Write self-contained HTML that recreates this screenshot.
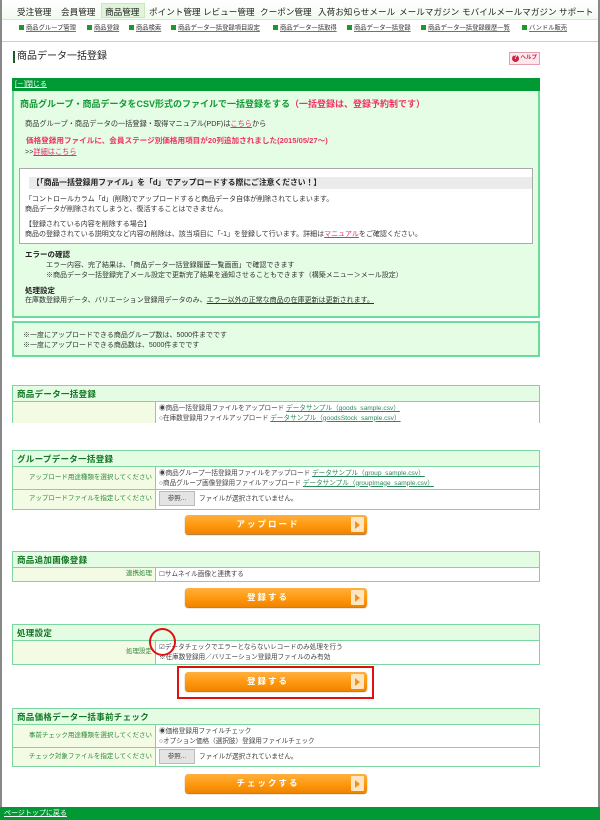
<!DOCTYPE html>
<html><head><meta charset="utf-8">
<style>
*{margin:0;padding:0;box-sizing:border-box}
body{width:600px;height:820px;overflow:hidden;background:#fff;font-family:"Liberation Sans","Noto Sans CJK JP",sans-serif;color:#333;position:relative;font-size:7px;line-height:1}
.a{position:absolute;white-space:nowrap}
.frame{position:absolute;left:0;top:0;width:600px;height:820px;border-left:2px solid #888;border-right:2px solid #888}
.nav{font-size:8.6px;color:#222;top:8px}
.sub{font-size:6.3px;color:#333;top:25px;text-decoration:underline;text-decoration-color:#2a2}
.sub i{display:inline-block;width:5px;height:5px;background:#1a9a2a;margin-right:2px;vertical-align:-0.5px}
.tb{position:absolute;left:12px;width:528px;border:1px solid #7dd6a0;background:#fff}
.th{height:16px;background:#e4fbe4;border-bottom:1px solid #7dd6a0;color:#117722;font-weight:bold;font-size:8.5px;padding:4px 0 0 4px;letter-spacing:.3px}
.row{display:flex;border-bottom:1px solid #7dd6a0}
.row:last-child{border-bottom:none}
.lb{width:143px;background:#f3fbe4;border-right:1px solid #7dd6a0;color:#2a8a3a;font-size:6.5px;text-align:right;padding-right:3px;display:flex;align-items:center;justify-content:flex-end}
.vl{flex:1;font-size:6.6px;padding:2px 3px;line-height:9.5px;color:#444}
.vl u{color:#2a8a5a}
.btn{position:absolute;left:185px;width:182px;height:19px;border-radius:3px;background:linear-gradient(#ffb040,#ff9a10 50%,#f08400);box-shadow:0 1px 1px #a86a20;color:#fff;font-weight:bold;font-size:8.5px;letter-spacing:2px;text-align:center;line-height:19px;padding-right:16px}
.btn:after{content:"";position:absolute;right:3px;top:2px;width:13px;height:15px;background:#ffe6c0;border-radius:1px}
.btn b{position:absolute;right:7px;top:6px;width:0;height:0;border-left:5px solid #f09020;border-top:4px solid transparent;border-bottom:4px solid transparent;z-index:2}
.fb{display:inline-block;width:36px;height:15px;background:#e4e4e4;border:1px solid #bbb;text-align:center;line-height:13px;font-size:6.5px;margin-right:4px;vertical-align:middle}
</style></head><body>
<div class="frame"></div>
<div class="a" style="left:2px;top:0;width:596px;height:20px;background:linear-gradient(#fff,#f2fbf0);border-bottom:1px solid #dde"></div>
<div class="a" style="left:101px;top:3px;width:44px;height:15px;background:#dff4d8;border:1px solid #c8e8c0"></div>
<div class="a nav" style="left:17px">受注管理</div>
<div class="a nav" style="left:61px">会員管理</div>
<div class="a nav" style="left:105px">商品管理</div>
<div class="a nav" style="left:149px">ポイント管理</div>
<div class="a nav" style="left:203px">レビュー管理</div>
<div class="a nav" style="left:260px">クーポン管理</div>
<div class="a nav" style="left:318px">入荷お知らせメール</div>
<div class="a nav" style="left:399px">メールマガジン</div>
<div class="a nav" style="left:462px">モバイルメールマガジン</div>
<div class="a nav" style="left:559px">サポート</div>
<div class="a sub" style="left:19px"><i></i>商品グループ管理</div>
<div class="a sub" style="left:87px"><i></i>商品登録</div>
<div class="a sub" style="left:129px"><i></i>商品検索</div>
<div class="a sub" style="left:171px"><i></i>商品データ一括登録項目設定</div>
<div class="a sub" style="left:273px"><i></i>商品データ一括取得</div>
<div class="a sub" style="left:347px"><i></i>商品データ一括登録</div>
<div class="a sub" style="left:421px"><i></i>商品データ一括登録履歴一覧</div>
<div class="a sub" style="left:522px"><i></i>バンドル販売</div>
<div class="a" style="left:2px;top:41px;width:596px;height:1px;background:#ccc"></div>
<div class="a" style="left:13px;top:51px;width:2px;height:12px;background:#1a5a2a"></div>
<div class="a" style="left:17px;top:52px;font-size:10px;color:#222">商品データ一括登録</div>
<div class="a" style="left:509px;top:52px;width:31px;height:13px;background:#fde8ee;border:1px solid #e0a0b0;font-size:5.5px;color:#d02040;padding:2px 0 0 2px;font-weight:bold"><span style="display:inline-block;width:7px;height:7px;border-radius:50%;background:#d02040;color:#fff;text-align:center;line-height:7px;font-size:6px">?</span> ヘルプ</div>
<div class="a" style="left:12px;top:78px;width:528px;height:13px;background:#009933;color:#fff;font-size:7px;padding:3px 0 0 3px;text-decoration:underline">[－]閉じる</div>
<div class="a" style="left:12px;top:91px;width:528px;height:227px;background:#e5fde5;border:2px solid #66dd99;border-top:none"></div>
<div class="a" style="left:20px;top:100px;font-size:9px;font-weight:bold;color:#119933">商品グループ・商品データをCSV形式のファイルで一括登録をする<span style="color:#ee3366">（一括登録は、登録予約制です）</span></div>
<div class="a" style="left:25px;top:120px;font-size:7.2px">商品グループ・商品データの一括登録・取得マニュアル(PDF)は<u style="color:#e03070">こちら</u>から</div>
<div class="a" style="left:26px;top:137px;font-size:7.6px;color:#ee3366;font-weight:bold">価格登録用ファイルに、会員ステージ別価格用項目が20列追加されました(2015/05/27〜)</div>
<div class="a" style="left:25px;top:148px;font-size:7.2px">&gt;&gt;<u style="color:#e03070">詳細はこちら</u></div>
<div class="a" style="left:19px;top:168px;width:514px;height:76px;background:#fff;border:1px solid #aaa"></div>
<div class="a" style="left:29px;top:177px;width:503px;height:12px;background:#ebebeb;font-size:7.8px;font-weight:bold;color:#222;padding:2px 0 0 3px">【「商品一括登録用ファイル」を「d」でアップロードする際にご注意ください！】</div>
<div class="a" style="left:25px;top:195px;font-size:7px;line-height:9.5px">「コントロールカラム「d」(削除)でアップロードすると商品データ自体が削除されてしまいます。<br>商品データが削除されてしまうと、復活することはできません。</div>
<div class="a" style="left:25px;top:220px;font-size:7px;line-height:9.5px">【登録されている内容を削除する場合】<br>商品の登録されている説明文など内容の削除は、該当項目に「-1」を登録して行います。詳細は<u style="color:#e03070">マニュアル</u>をご確認ください。</div>
<div class="a" style="left:25px;top:251px;font-size:7.5px;font-weight:bold;color:#222">エラーの確認</div>
<div class="a" style="left:46px;top:261px;font-size:7px;line-height:9.5px">エラー内容、完了結果は、「商品データ一括登録履歴一覧画面」で確認できます<br>※商品データ一括登録完了メール設定で更新完了結果を通知させることもできます（構築メニュー＞メール設定）</div>
<div class="a" style="left:25px;top:287px;font-size:7.5px;font-weight:bold;color:#222">処理設定</div>
<div class="a" style="left:25px;top:297px;font-size:7px">在庫数登録用データ、バリエーション登録用データのみ、<u>エラー以外の正常な商品の在庫更新は更新されます。</u></div>
<div class="a" style="left:12px;top:321px;width:528px;height:36px;background:#e5fde5;border:2px solid #66dd99;font-size:7px;line-height:9.5px;padding:8px 0 0 9px">※一度にアップロードできる商品グループ数は、5000件までです<br>※一度にアップロードできる商品数は、5000件までです</div>
<div class="tb" style="top:385px;height:38px;border-bottom:none">
<div class="th">商品データ一括登録</div>
<div class="row" style="height:21px"><div class="lb"></div><div class="vl">◉商品一括登録用ファイルをアップロード <u>データサンプル（goods_sample.csv）</u><br>○在庫数登録用ファイルアップロード <u>データサンプル（goodsStock_sample.csv）</u></div></div>
</div>
<div class="tb" style="top:450px;height:60px">
<div class="th">グループデータ一括登録</div>
<div class="row" style="height:23px"><div class="lb">アップロード用途種類を選択してください</div><div class="vl">◉商品グループ一括登録用ファイルをアップロード <u>データサンプル（group_sample.csv）</u><br>○商品グループ画像登録用ファイルアップロード <u>データサンプル（groupImage_sample.csv）</u></div></div>
<div class="row" style="height:19px"><div class="lb">アップロードファイルを指定してください</div><div class="vl" style="padding-top:1px"><span class="fb">参照...</span>ファイルが選択されていません。</div></div>
</div>
<div class="btn" style="top:515px">アップロード<b></b></div>
<div class="tb" style="top:551px;height:31px">
<div class="th">商品追加画像登録</div>
<div class="row" style="height:13px"><div class="lb">連携処理</div><div class="vl" style="padding-top:2px">☐サムネイル画像と連携する</div></div>
</div>
<div class="btn" style="top:588px">登録する<b></b></div>
<div class="tb" style="top:624px;height:41px">
<div class="th">処理設定</div>
<div class="row" style="height:23px"><div class="lb">処理設定</div><div class="vl">☑データチェックでエラーとならないレコードのみ処理を行う<br>※在庫数登録用／バリエーション登録用ファイルのみ有効</div></div>
</div>
<div class="a" style="left:149px;top:628px;width:27px;height:28px;border:2px solid #e01010;border-radius:50%"></div>
<div class="btn" style="top:672px">登録する<b></b></div>
<div class="a" style="left:177px;top:666px;width:197px;height:33px;border:2px solid #e01010"></div>
<div class="tb" style="top:708px;height:59px">
<div class="th">商品価格データ一括事前チェック</div>
<div class="row" style="height:23px"><div class="lb">事前チェック用途種類を選択してください</div><div class="vl">◉価格登録用ファイルチェック<br>○オプション価格（選択肢）登録用ファイルチェック</div></div>
<div class="row" style="height:18px"><div class="lb">チェック対象ファイルを指定してください</div><div class="vl" style="padding-top:1px"><span class="fb">参照...</span>ファイルが選択されていません。</div></div>
</div>
<div class="btn" style="top:774px">チェックする<b></b></div>
<div class="a" style="left:0;top:807px;width:600px;height:13px;background:#009933;color:#fff;font-size:7px;padding:3px 0 0 4px;text-decoration:underline">ページトップに戻る</div>
</body></html>
